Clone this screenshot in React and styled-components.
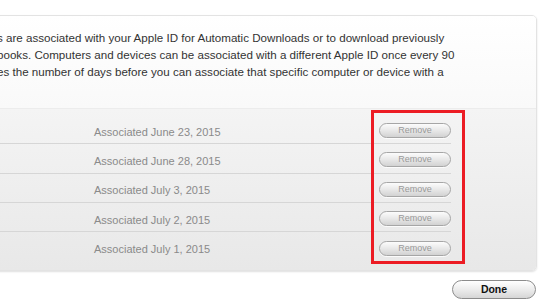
import React from 'react'
import styled, { createGlobalStyle } from 'styled-components'

const Global = createGlobalStyle`
    html, body {
        margin: 0;
        padding: 0;
        background: #fff;
    }
    body {
        font-family: "Liberation Sans", Arial, sans-serif;
    }
`

const Page = styled.div`
    position: relative;
    width: 550px;
    height: 306px;
    overflow: hidden;
    padding-top: 15px;
    box-sizing: border-box;
`

const Panel = styled.div`
    margin-left: -20px;
    width: 557px;
    box-sizing: border-box;
    border: 1px solid #e3e3e3;
    border-radius: 5px;
    overflow: hidden;
    box-shadow: 0 1px 2px rgba(0, 0, 0, 0.13);
`

const Intro = styled.div`
    height: 92px;
    box-sizing: border-box;
    padding: 13px 0 0 16px;
    background: linear-gradient(#ffffff, #f9f9f9);
    color: #333;
    font-size: 11.6px;
    line-height: 17px;
    white-space: nowrap;
`

const List = styled.div`
    background: linear-gradient(#f4f4f4, #e8e8e8);
    padding: 6px 0 8px;
    border-top: 1px solid #ececec;
`

const Row = styled.div`
    height: 29.33px;
    box-sizing: border-box;
    margin-right: 85px;
    padding: 5px 0 0 113px;
    display: flex;
    align-items: center;
    justify-content: space-between;
    border-bottom: ${p => (p.last ? 'none' : '1px solid #d6d6d6')};
`

const DateText = styled.span`
    color: #8a8a8a;
    font-size: 11px;
`

const RemoveButton = styled.button`
    width: 72px;
    height: 15px;
    margin-top: -2px;
    padding: 0;
    border: 1px solid #a6a6a6;
    border-radius: 8px;
    background: linear-gradient(#fcfcfc, #e8e8e8 50%, #d2d2d2);
    color: #999;
    font-family: "Liberation Sans", Arial, sans-serif;
    font-size: 9px;
    line-height: 13px;
    box-shadow: 0 1px 0 rgba(255, 255, 255, 0.8);
`

const Footer = styled.div`
    display: flex;
    justify-content: flex-end;
    padding: 9px 14px 0 0;
`

const DoneButton = styled.button`
    width: 84px;
    height: 19px;
    padding: 0;
    border: 1px solid #8c8c8c;
    border-radius: 10px;
    background: linear-gradient(#ffffff, #ececec 50%, #d6d6d6);
    color: #111;
    font-family: "Liberation Sans", Arial, sans-serif;
    font-weight: bold;
    font-size: 10.5px;
    line-height: 16px;
`

const Highlight = styled.div`
    position: absolute;
    left: 371px;
    top: 110px;
    width: 94px;
    height: 154px;
    box-sizing: border-box;
    border: 3px solid #ec1c24;
    pointer-events: none;
`

const devices = [
    'Associated June 23, 2015',
    'Associated June 28, 2015',
    'Associated July 3, 2015',
    'Associated July 2, 2015',
    'Associated July 1, 2015',
]

const App = () => {
    return (
        <Page>
            <Global />
            <Panel>
                <Intro>
                    s are associated with your Apple ID for Automatic Downloads or to download previously<br />
                    books. Computers and devices can be associated with a different Apple ID once every 90<br />
                    es the number of days before you can associate that specific computer or device with a
                </Intro>
                <List>
                    {devices.map((d, i) => (
                        <Row key={i} last={i === devices.length - 1}>
                            <DateText>{d}</DateText>
                            <RemoveButton>Remove</RemoveButton>
                        </Row>
                    ))}
                </List>
            </Panel>
            <Footer>
                <DoneButton>Done</DoneButton>
            </Footer>
            <Highlight />
        </Page>
    )
}

export default App
